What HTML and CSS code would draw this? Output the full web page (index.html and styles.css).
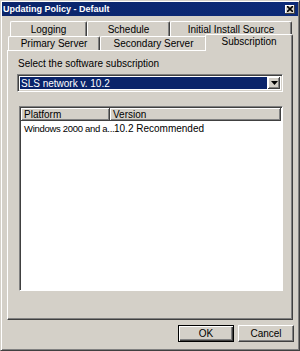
FILE: index.html
```html
<!DOCTYPE html>
<html lang="en">
<head>
  <meta charset="UTF-8">
  <title>Updating Policy - Default</title>
  <link rel="stylesheet" href="styles.css">
</head>
<body>
  <div class="window">
    <div class="titlebar">
      <span class="title">Updating Policy - Default</span>
      <span class="close">
        <svg width="6" height="6" viewBox="0 0 6 6"><path d="M0 0L6 6M6 0L0 6" stroke="#000" stroke-width="1.6"/></svg>
      </span>
    </div>

    <!-- Две строки вкладок -->
    <div class="tabs">
      <div class="tab-row back">
        <div class="tab t-logging">Logging</div>
        <div class="tab t-schedule">Schedule</div>
        <div class="tab t-install">Initial Install Source</div>
      </div>
      <div class="tab-row front">
        <div class="tab t-primary">Primary Server</div>
        <div class="tab t-secondary">Secondary Server</div>
        <div class="tab t-subscription active">Subscription</div>
      </div>
    </div>

    <div class="panel">
      <div class="field-label">Select the software subscription</div>
      <div class="combo">
        <div class="combo-value"><span>SLS network v. 10.2</span></div>
        <div class="combo-btn">
          <svg width="7" height="4" viewBox="0 0 7 4"><path d="M0 0H7L3.5 4Z" fill="#000"/></svg>
        </div>
      </div>
      <div class="listview">
        <div class="lv-head">
          <div class="lv-col col-platform">Platform</div>
          <div class="lv-col col-version">Version</div>
        </div>
        <div class="lv-row">
          <div class="col-platform">Windows 2000 and a...</div>
          <div class="col-version">10.2 Recommended</div>
        </div>
      </div>
    </div>

    <div class="buttons">
      <button class="btn default">OK</button>
      <button class="btn">Cancel</button>
    </div>
  </div>
</body>
</html>
```

FILE: styles.css
```css
/* Классическое окно Windows */
:root {
  --face: #d4d0c8;
  --shadow: #808080;
  --dark: #404040;
  --light: #ffffff;
  --title: #0a246a;
}
body { margin:0; font-family:'Liberation Sans', Arial, sans-serif; font-size:10px; color:#000; background:var(--face); }

.window { width:300px; height:351px; box-sizing:border-box; background:var(--face); border:1px solid; border-color:var(--face) var(--dark) var(--dark) var(--face); box-shadow:inset 1px 1px var(--light), inset -1px -1px var(--shadow); padding:1px; }

.titlebar { height:14px; display:flex; align-items:center; justify-content:space-between; padding:0 3px 0 1px; background:linear-gradient(to right, #0a246a, #0c2a78); }
.title { color:#fff; font-weight:bold; font-size:9px; }
.close { width:10px; height:9px; display:flex; align-items:center; justify-content:center; background:var(--face); box-shadow:inset -1px -1px var(--dark), inset 1px 1px var(--light); }

/* Вкладки */
.tabs { margin-top:5px; }
.tab-row { display:flex; }
.tab-row.back { height:15px; margin-left:8px; }
.tab-row.front { height:14px; margin-left:6px; }
.tab { box-sizing:border-box; display:flex; align-items:center; justify-content:center; white-space:nowrap; border-top:1px solid var(--light); border-left:1px solid var(--light); border-right:1px solid var(--dark); box-shadow:inset -1px 0 var(--shadow); border-radius:2px 2px 0 0; background:var(--face); }
.t-logging { width:77px; }
.t-schedule { width:83px; }
.t-install { width:122px; }
.t-primary { width:92px; }
.t-secondary { width:107px; }
.t-subscription { width:86px; }
.tab.active { position:relative; z-index:2; height:17px; margin:-2px -2px 0 -2px; width:88px; padding-bottom:4px; }

.panel { position:relative; z-index:1; margin:0 0 0 5px; width:286px; height:270px; box-sizing:border-box; border:1px solid; border-color:var(--light) var(--dark) var(--dark) var(--light); box-shadow:inset -1px -1px var(--shadow); padding:7px 0 0 9px; }

.field-label { height:12px; line-height:12px; padding-left:1px; }

/* Комбобокс */
.combo { margin-top:4px; width:266px; height:18px; box-sizing:border-box; display:flex; background:#fff; border:1px solid; border-color:var(--shadow) var(--light) var(--light) var(--shadow); box-shadow:inset 1px 1px var(--dark), inset -1px -1px var(--face); padding:2px; }
.combo-value { flex:1; display:flex; align-items:center; background:var(--title); color:#fff; padding-left:1px; margin-right:1px; }
.combo-btn { width:12px; display:flex; align-items:center; justify-content:center; background:var(--face); box-shadow:inset -1px -1px var(--dark), inset 1px 1px var(--light), inset -2px -2px var(--shadow); }

/* Список */
.listview { margin:14px 0 0 2px; width:264px; height:185px; box-sizing:border-box; background:#fff; border:1px solid; border-color:var(--shadow) var(--light) var(--light) var(--shadow); box-shadow:inset 1px 1px var(--dark); padding:1px; }
.lv-head { display:flex; height:13px; }
.lv-col { box-sizing:border-box; display:flex; align-items:center; padding-left:3px; background:var(--face); box-shadow:inset -1px -1px var(--dark), inset 1px 1px var(--light), inset -2px -2px var(--shadow); }
.lv-head .col-platform { width:89px; }
.lv-head .col-version { flex:1; }
.lv-row { display:flex; height:14px; align-items:center; white-space:nowrap; }
.lv-row .col-platform { width:89px; flex-shrink:0; padding-left:3px; box-sizing:border-box; font-size:9.5px; letter-spacing:-0.3px; }
.lv-row .col-version { padding-left:4px; }

/* Кнопки */
.buttons { display:flex; justify-content:flex-end; gap:4px; margin-top:5px; padding-right:4px; }
.btn { width:56px; height:17px; box-sizing:border-box; font-family:inherit; font-size:10px; color:#000; background:var(--face); border:1px solid; border-color:var(--light) var(--dark) var(--dark) var(--light); box-shadow:inset -1px -1px var(--shadow); padding:0; }
.btn.default { border:1px solid #000; box-shadow:inset 1px 1px var(--light), inset -1px -1px var(--dark), inset -2px -2px var(--shadow); }
```
